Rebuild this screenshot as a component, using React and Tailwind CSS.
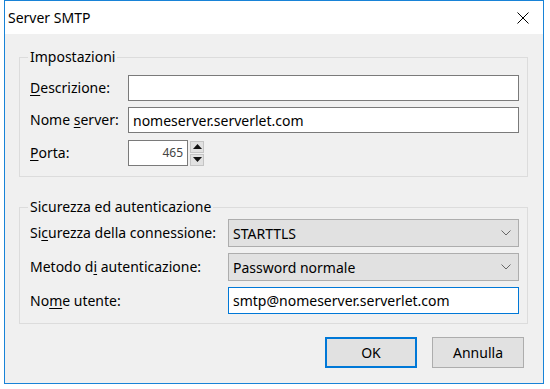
import React from "react";

const FONT = { fontFamily: "'Noto Sans', 'Open Sans', sans-serif" };

const Row = ({ label, labelW, children, className = "" }) => (
  <div className={`flex items-center ${className}`}>
    <div className="text-[14px] text-black leading-none" style={{ width: labelW }}>
      {label}
    </div>
    <div className="flex-1">{children}</div>
  </div>
);

const TextBox = ({ value, focused }) => (
  <div
    className={`bg-white border flex items-center px-[4px] text-[14px] text-black ${
      focused ? "border-[#0078d7] h-[27px]" : "border-[#7a7a7a] h-[26px]"
    }`}
  >
    {value}
  </div>
);

const Chevron = () => (
  <svg width="10" height="6" viewBox="0 0 10 6" className="mr-[7px]">
    <path d="M0.5 0.5 L5 5 L9.5 0.5" fill="none" stroke="#666" strokeWidth="1" />
  </svg>
);

const Select = ({ value }) => (
  <div className="h-[28px] bg-[#e1e1e1] border border-[#adadad] flex items-center justify-between pl-[4px] text-[14px] text-black">
    <span>{value}</span>
    <Chevron />
  </div>
);

const Arrow = ({ up }) => (
  <svg width="9" height="5" viewBox="0 0 9 5">
    <path d={up ? "M0 5 L4.5 0 L9 5 Z" : "M0 0 L4.5 5 L9 0 Z"} fill="#111" />
  </svg>
);

const Group = ({ title, children, className = "" }) => (
  <fieldset className={`border border-[#dcdcdc] pl-[10px] pr-[8px] ${className}`}>
    <legend className="px-[2px] -ml-[2px] text-[14px] text-black leading-[20px]">{title}</legend>
    {children}
  </fieldset>
);

const U = ({ children }) => <span className="underline underline-offset-[2px]">{children}</span>;

export default function App() {
  return (
    <div className="w-[550px] h-[389px] bg-white" style={FONT}>
      <div className="ml-[4px] w-[540px] h-[384px] border border-[#1883d7] flex flex-col bg-[#f0f0f0]">
        {/* barra del titolo */}
        <div className="h-[33px] bg-white flex items-center justify-between pl-[3px] pr-[14px]">
          <span className="text-[14px] text-black">Server SMTP</span>
          <svg width="12" height="12" viewBox="0 0 12 12">
            <path d="M0.5 0.5 L11.5 11.5 M11.5 0.5 L0.5 11.5" stroke="#000" strokeWidth="1" />
          </svg>
        </div>

        <div className="flex-1 pl-[14px] pr-[15px] pt-[13px] flex flex-col">
          <Group title="Impostazioni" className="pb-[10px]">
            <div className="pt-[8px] flex flex-col">
              <Row label={<><U>D</U>escrizione:</>} labelW={98}>
                <TextBox value="" />
              </Row>
              <Row label={<>Nome <U>s</U>erver:</>} labelW={98} className="mt-[6px]">
                <TextBox value="nomeserver.serverlet.com" />
              </Row>
              <Row label={<><U>P</U>orta:</>} labelW={98} className="mt-[7px]">
                <div className="flex items-center gap-[2px]">
                  <div className="w-[60px] h-[26px] bg-white border border-[#7a7a7a] flex items-center justify-end pr-[4px] text-[12px] text-[#444]">
                    465
                  </div>
                  <div className="flex flex-col gap-[1px]">
                    <div className="w-[14px] h-[12px] bg-[#e1e1e1] border border-[#c4c4c4] flex items-center justify-center">
                      <Arrow up />
                    </div>
                    <div className="w-[14px] h-[12px] bg-[#e1e1e1] border border-[#c4c4c4] flex items-center justify-center">
                      <Arrow />
                    </div>
                  </div>
                </div>
              </Row>
            </div>
          </Group>

          <Group title="Sicurezza ed autenticazione" className="mt-[20px] pb-[9px]">
            <div className="pt-[2px] flex flex-col">
              <Row label={<>Si<U>c</U>urezza della connessione:</>} labelW={198}>
                <Select value="STARTTLS" />
              </Row>
              <Row label={<>Metodo d<U>i</U> autenticazione:</>} labelW={198} className="mt-[6px]">
                <Select value="Password normale" />
              </Row>
              <Row label={<>No<U>m</U>e utente:</>} labelW={198} className="mt-[6px]">
                <TextBox value="smtp@nomeserver.serverlet.com" focused />
              </Row>
            </div>
          </Group>

          <div className="flex justify-end gap-[15px] mt-[13px] pr-[4px]">
            <button className="w-[92px] h-[31px] bg-[#e1e1e1] border-2 border-[#0078d7] text-[14px] text-black">
              OK
            </button>
            <button className="w-[92px] h-[31px] bg-[#e1e1e1] border border-[#adadad] text-[14px] text-black">
              Annulla
            </button>
          </div>
        </div>
      </div>
    </div>
  );
}
